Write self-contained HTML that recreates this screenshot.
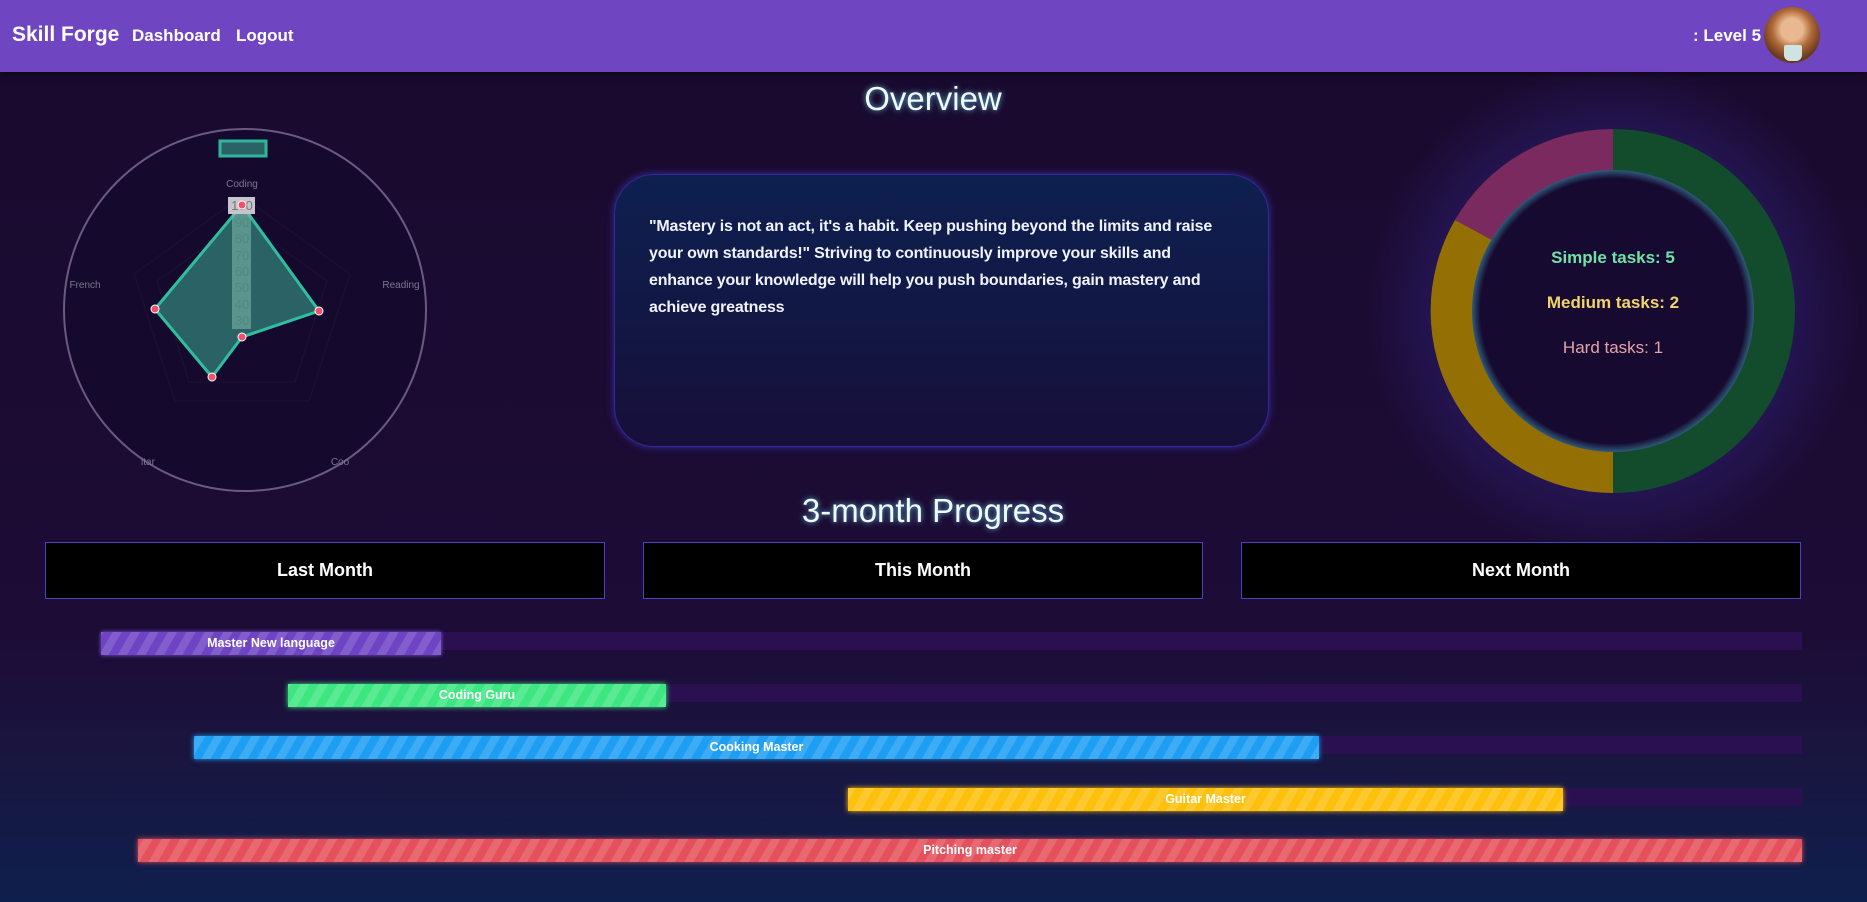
<!DOCTYPE html>
<html><head><meta charset="utf-8"><style>
*{margin:0;padding:0;box-sizing:border-box}
html,body{width:1867px;height:902px;overflow:hidden}
body{font-family:"Liberation Sans",sans-serif;background:linear-gradient(180deg,#190a2e 0%,#1c0c36 70%,#191640 85%,#0f1f4d 100%);position:relative;color:#fff}
.nav{position:absolute;left:0;top:0;width:1867px;height:72px;background:#7045c2;box-shadow:0 2px 8px rgba(0,0,0,.5)}
.nav span{position:absolute;top:26px;font-weight:bold;color:#fff}
.glow{position:absolute;left:1363px;top:60px;width:500px;height:500px;border-radius:50%;background:radial-gradient(circle,rgba(60,40,150,.7) 0%,rgba(50,35,130,.5) 45%,rgba(30,15,70,0) 70%)}
h1{position:absolute;font-weight:normal;font-size:33px;color:#eefaff;text-shadow:0 0 6px rgba(120,230,255,.8);text-align:center;width:600px}
.quote{position:absolute;left:614px;top:174px;width:655px;height:273px;border-radius:40px;background:linear-gradient(180deg,#0e2050,#170f3a);box-shadow:0 0 8px #3a2da0;border:1px solid #34289a;padding:38px 30px 38px 34px;font-size:16px;font-weight:bold;line-height:27px;color:#f0f4ff;letter-spacing:-0.2px}
.box{position:absolute;top:542px;width:560px;height:57px;background:#000;border:1px solid #4b3fc7;text-align:center;line-height:55px;font-size:18px;font-weight:bold}
.track{position:absolute;height:18px;background:#2a1050}
.bar{position:absolute;height:23px;font-size:12.5px;font-weight:bold;text-align:center;line-height:23px;color:#fff;background-image:repeating-linear-gradient(-60deg,rgba(255,255,255,.14) 0 8px,transparent 8px 16px)}
</style></head><body>
<div class="nav">
<span style="left:12px;top:23px;font-size:21px">Skill Forge</span>
<span style="left:132px;font-size:17px">Dashboard</span>
<span style="left:236px;font-size:17px">Logout</span>
<span style="left:1693px;font-size:17px">: Level 5</span>
<div style="position:absolute;left:1764px;top:7px;width:56px;height:56px;border-radius:50%;background:radial-gradient(circle at 50% 40%,#e8b890 0 25%,#b06a38 45%,#6a3a20 70%);overflow:hidden"><div style="position:absolute;left:20px;top:38px;width:18px;height:16px;background:#cfe3e3;border-radius:2px 2px 6px 6px"></div></div>
</div>
<div class="glow"></div>
<h1 style="left:633px;top:80px">Overview</h1>
<svg style="position:absolute;left:0;top:72px" width="520" height="440" viewBox="0 72 520 440">
<circle cx="245" cy="310" r="181" fill="#150a2d" stroke="#6a5a82" stroke-width="2"/>
<g fill="none" stroke="#1b1033" stroke-width="1.5">
<polygon points="242,196 350,274 309,401 175,401 134,274"/>
<polygon points="242,220 327,281 295,382 189,382 157,281"/>
</g>
<rect x="220" y="141" width="46" height="15" fill="#2a6265" stroke="#2fb59a" stroke-width="3"/>
<text x="242" y="187" fill="#7d7590" font-size="10" text-anchor="middle" font-family="Liberation Sans">Coding</text>
<text x="85" y="288" fill="#7d7590" font-size="10" text-anchor="middle" font-family="Liberation Sans">French</text>
<text x="401" y="288" fill="#7d7590" font-size="10" text-anchor="middle" font-family="Liberation Sans">Reading</text>
<text x="148" y="465" fill="#7d7590" font-size="10" text-anchor="middle" font-family="Liberation Sans">itar</text>
<text x="340" y="465" fill="#7d7590" font-size="10" text-anchor="middle" font-family="Liberation Sans">Coo</text>
<polygon points="242,205 319,311 242,337 212,377 155,309" fill="#2a6265" stroke="#2fbf9f" stroke-width="3"/>
<rect x="228" y="197" width="27" height="17" fill="#c8c4cc"/>
<rect x="232" y="214" width="19" height="115" fill="#7bb5a8" opacity=".6"/>
<g fill="#4f8a80" font-size="13" text-anchor="middle" font-family="Liberation Sans">
<text x="242" y="210" fill="#777">100</text><text x="242" y="227">90</text><text x="242" y="243">80</text><text x="242" y="260">70</text><text x="242" y="276">60</text><text x="242" y="292">50</text><text x="242" y="309">40</text><text x="242" y="325">30</text></g>
<g fill="#f0506a" stroke="#fff" stroke-width="1"><circle cx="242" cy="205" r="4"/><circle cx="319" cy="311" r="4"/><circle cx="242" cy="337" r="4"/><circle cx="212" cy="377" r="4"/><circle cx="155" cy="309" r="4"/></g>
</svg>
<div class="quote">"Mastery is not an act, it's a habit. Keep pushing beyond the limits and raise your own standards!" Striving to continuously improve your skills and enhance your knowledge will help you push boundaries, gain mastery and achieve greatness</div>
<svg style="position:absolute;left:1413px;top:110px" width="400" height="400" viewBox="1413 110 400 400">
<defs><radialGradient id="ig"><stop offset="94%" stop-color="#160a30"/><stop offset="100%" stop-color="#2f5a7a"/></radialGradient></defs>
<path d="M1613 129 A182 182 0 0 1 1613 493 L1613 451 A140 140 0 0 0 1613 171Z" fill="#124c2c"/>
<path d="M1613 493 A182 182 0 0 1 1455 220 L1492 240 A140 140 0 0 0 1613 451Z" fill="#947004"/>
<path d="M1455 220 A182 182 0 0 1 1613 129 L1613 171 A140 140 0 0 0 1492 240Z" fill="#7a2a5e"/>
<circle cx="1613" cy="311" r="141" fill="url(#ig)"/>
<g font-family="Liberation Sans" font-size="17" font-weight="bold" text-anchor="middle">
<text x="1613" y="263" fill="#6de3a9">Simple tasks: 5</text>
<text x="1613" y="308" fill="#f2d46a">Medium tasks: 2</text>
<text x="1613" y="353" fill="#e6a2a8" font-weight="normal">Hard tasks: 1</text></g>
</svg>
<h1 style="left:633px;top:492px">3-month Progress</h1>
<div class="box" style="left:45px">Last Month</div>
<div class="box" style="left:643px">This Month</div>
<div class="box" style="left:1241px">Next Month</div>
<div class="track" style="left:101px;top:632px;width:1701px"></div>
<div class="bar" style="left:101px;top:632px;width:340px;background-color:#6e44c4;box-shadow:0 0 4px #8a5ae0">Master New language</div>
<div class="track" style="left:288px;top:684px;width:1514px"></div>
<div class="bar" style="left:288px;top:684px;width:378px;background-color:#3ee681;box-shadow:0 0 5px #3ee681">Coding Guru</div>
<div class="track" style="left:194px;top:736px;width:1608px"></div>
<div class="bar" style="left:194px;top:736px;width:1125px;background-color:#1d9ef2;box-shadow:0 0 5px #1d9ef2">Cooking Master</div>
<div class="track" style="left:848px;top:788px;width:954px"></div>
<div class="bar" style="left:848px;top:788px;width:715px;background-color:#fdc00c;box-shadow:0 0 5px #fdc00c">Guitar Master</div>
<div class="bar" style="left:138px;top:839px;width:1664px;background-color:#e4505b;box-shadow:0 0 5px #e4505b">Pitching master</div>
</body></html>
